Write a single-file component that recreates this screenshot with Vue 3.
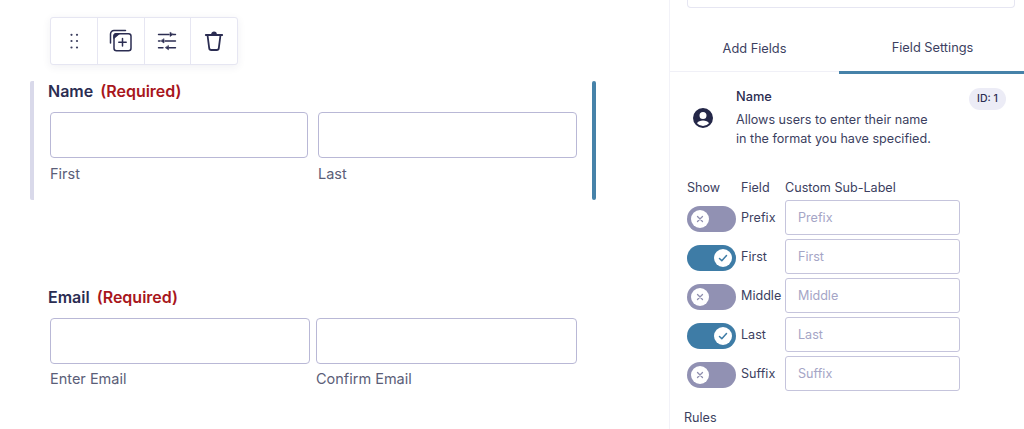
<script setup>
const rows = [
  { name: 'Prefix', on: false },
  { name: 'First', on: true },
  { name: 'Middle', on: false },
  { name: 'Last', on: true },
  { name: 'Suffix', on: false },
]
</script>

<template>
  <div class="page">
    <main class="canvas">
      <div class="toolbar">
        <button class="tool">
          <svg width="24" height="24" viewBox="0 0 24 24" fill="#3c3f5f"><circle cx="9.500" cy="5.800" r="1.100"/><circle cx="15" cy="5.800" r="1.100"/><circle cx="9.500" cy="12" r="1.100"/><circle cx="15" cy="12" r="1.100"/><circle cx="9.500" cy="18.500" r="1.100"/><circle cx="15" cy="18.500" r="1.100"/></svg>
        </button>
        <button class="tool">
          <svg width="24" height="24" viewBox="0 0 24 24" fill="none" stroke="#2b2d52" stroke-width="1.500" stroke-linecap="round" stroke-linejoin="round"><rect x="5" y="4.800" width="17" height="17" rx="2.500"/><path d="M13.500 9.500v7.500M9.800 13.200h7.400"/><path d="M1.500 14V5a3.500 3.500 0 0 1 3.500-3.500h11.500"/><path d="M5 9V7a2.200 2.200 0 0 1 2.200-2.200H10z" fill="#2b2d52"/></svg>
        </button>
        <button class="tool">
          <svg width="24" height="24" viewBox="0 0 24 24" fill="none" stroke="#2b2d52" stroke-width="1.400" stroke-linecap="round"><path d="M3.500 5.500h10.500M18 5.500h2.500M3.500 12h1.500M10 12h10.500M3.500 18.800h4.500M14 18.800h6.500"/><path d="M15 3.500v4l3 -2zM9 10v4l-3 -2zM13.500 16.800v4l-3 -2z" fill="#2b2d52" stroke-width="0.600"/></svg>
        </button>
        <button class="tool">
          <svg width="24" height="24" viewBox="0 0 24 24" fill="none" stroke="#2b2d52" stroke-width="1.800" stroke-linecap="round" stroke-linejoin="round"><path d="M3.800 6h16.400"/><path d="M5.500 6l1.700 13.200a2 2 0 0 0 2 1.800h5.600a2 2 0 0 0 2-1.800L18.500 6"/><path d="M10 5.500c0-2.700 4-2.700 4 0" fill="#2b2d52"/></svg>
        </button>
      </div>

      <section class="field selected">
        <h3 class="legend">Name <em>(Required)</em></h3>
        <div class="inputs name-inputs">
          <div class="cell"><div class="box"></div><span class="sub">First</span></div>
          <div class="cell"><div class="box"></div><span class="sub">Last</span></div>
        </div>
      </section>

      <section class="field email">
        <h3 class="legend">Email <em>(Required)</em></h3>
        <div class="inputs email-inputs">
          <div class="cell"><div class="box"></div><span class="sub">Enter Email</span></div>
          <div class="cell"><div class="box"></div><span class="sub">Confirm Email</span></div>
        </div>
      </section>
    </main>

    <aside class="panel">
      <div class="search"></div>
      <nav class="tabs">
        <div class="tab">Add Fields</div>
        <div class="tab active">Field Settings</div>
      </nav>
      <div class="info">
        <svg class="avatar" width="24" height="24" viewBox="0 0 24 24"><path fill="#242748" fill-rule="evenodd" d="M12 2a10 10 0 1 0 0 20 10 10 0 0 0 0-20zm0 4a3.500 3.500 0 1 1 0 7 3.500 3.500 0 0 1 0-7zm0 14a7.800 7.800 0 0 1-6-2.800c.9-1.700 3.400-2.700 6-2.700s5.100 1 6 2.700a7.800 7.800 0 0 1-6 2.800z"/></svg>
        <div class="info-text">
          <div class="info-name">Name</div>
          <p>Allows users to enter their name<br>in the format you have specified.</p>
        </div>
        <span class="badge">ID: 1</span>
      </div>

      <div class="grid-head">
        <span class="h-show">Show</span><span class="h-field">Field</span><span>Custom Sub-Label</span>
      </div>
      <div class="rows">
        <div v-for="r in rows" :key="r.name" class="row">
          <span class="toggle" :class="{ on: r.on }">
            <span class="knob">
              <svg v-if="r.on" width="12" height="12" viewBox="0 0 12 12" fill="none" stroke="#3e7ca6" stroke-width="1.500" stroke-linecap="round" stroke-linejoin="round"><path d="M2.500 6.500l2.300 2.200L9.500 3.500"/></svg>
              <svg v-else width="8" height="8" viewBox="0 0 8 8" fill="none" stroke="#8f8fae" stroke-width="1.300" stroke-linecap="round"><path d="M1.500 1.500l5 5M6.500 1.500l-5 5"/></svg>
            </span>
          </span>
          <span class="row-name">{{ r.name }}</span>
          <div class="row-input">{{ r.name }}</div>
        </div>
      </div>
      <div class="rules">Rules</div>
    </aside>
  </div>
</template>

<style>
html, body { margin: 0; background: #fff; overflow: hidden; }
</style>

<style scoped>
.page {
  display: flex;
  width: 1024px;
  height: 429px;
  overflow: hidden;
  font-family: Inter, "Liberation Sans", sans-serif;
  color: #3c3f5f;
  background: #fff;
}
.canvas {
  width: 669px;
  flex: none;
  padding: 17px 0 0 30px;
  box-sizing: border-box;
}
.toolbar {
  display: flex;
  width: 188px;
  height: 48px;
  margin-left: 20px;
  box-sizing: border-box;
  border: 1px solid #e6e6f2;
  border-radius: 3px;
  background: #fff;
  box-shadow: 0 2px 8px rgba(40, 40, 90, 0.07);
}
.tool {
  flex: 1;
  display: flex;
  align-items: center;
  justify-content: center;
  padding: 0;
  border: 0;
  border-right: 1px solid #e6e6f2;
  background: none;
}
.tool:last-child { border-right: 0; }
.field {
  box-sizing: border-box;
  width: 566px;
  height: 119px;
  margin-top: 16px;
  padding-left: 14px;
  border-left: 4px solid #d9d9ea;
  border-radius: 2px;
  position: relative;
}
.selected::after {
  content: "";
  position: absolute;
  right: 0;
  top: 0;
  bottom: 0;
  width: 4px;
  border-radius: 2px;
  background: #4682a9;
}
.legend {
  margin: 0;
  font-size: 16px;
  line-height: 20px;
  font-weight: 600;
  color: #2b2d52;
}
.legend em {
  font-style: normal;
  color: #a8161c;
  margin-left: 3px;
}
.inputs { display: flex; margin-top: 11px; margin-left: 2px; }
.name-inputs { gap: 10px; }
.name-inputs .cell:first-child { width: 258px; }
.name-inputs .cell:last-child { width: 259px; }
.email-inputs { gap: 6px; }
.email-inputs .cell:first-child { width: 260px; }
.email-inputs .cell:last-child { width: 261px; }
.box {
  height: 46px;
  box-sizing: border-box;
  border: 1px solid #b9b8d6;
  border-radius: 4px;
  background: #fff;
}
.sub {
  display: block;
  margin-top: 7px;
  font-size: 14.500px;
  line-height: 18px;
  color: #5b5e78;
}
.email {
  margin-top: 87px;
  border-left-color: transparent;
}
.email .sub { margin-top: 6px; }
.panel {
  width: 355px;
  flex: none;
  border-left: 1px solid #f2f2f8;
  box-sizing: border-box;
}
.search {
  box-sizing: border-box;
  width: 328px;
  height: 9px;
  margin-left: 17px;
  margin-top: -1px;
  border: 1px solid #e6e6f2;
  border-top: 0;
  border-radius: 0 0 4px 4px;
}
.tabs {
  display: flex;
  height: 63px;
  border-bottom: 1px solid #f0f0f7;
}
.tab {
  flex: 1;
  display: flex;
  align-items: center;
  justify-content: center;
  padding-top: 15px;
  box-sizing: border-box;
  height: 66px;
  font-size: 12.800px;
  color: #3c3f5f;
}
.tab:first-child { flex: none; width: 169px; }
.tab.active { border-bottom: 3px solid #4682a9; padding-left: 2px; }
.info {
  display: flex;
  position: relative;
  margin-top: 15px;
  padding-left: 21px;
  align-items: center;
}
.avatar { flex: none; margin-right: 21px; }
.info-text { padding-top: 1px; }
.info-name { font-size: 12.800px; line-height: 18px; font-weight: 500; color: #2b2d52; }
.info-text p {
  margin: 4px 0 0;
  font-size: 12.600px;
  line-height: 19px;
  color: #3c3f5f;
}
.badge {
  position: absolute;
  left: 299px;
  top: 1px;
  width: 37px;
  height: 22px;
  line-height: 22px;
  text-align: center;
  border-radius: 11px;
  background: #ececf6;
  font-size: 10.500px;
  font-weight: 500;
  color: #2b2d52;
}
.grid-head {
  display: flex;
  margin: 32px 0 0 17px;
  font-size: 12.600px;
  line-height: 16px;
  color: #3c3f5f;
}
.h-show { width: 54px; }
.h-field { width: 44px; }
.rows {
  display: flex;
  flex-direction: column;
  gap: 4px;
  margin: 4px 0 0 17px;
}
.row { display: flex; align-items: center; height: 35px; }
.toggle {
  width: 49px;
  height: 26px;
  margin-top: 3px;
  border-radius: 13px;
  background: #9191b3;
  display: flex;
  align-items: center;
  padding: 0 4px;
  box-sizing: border-box;
  flex: none;
}
.toggle.on { background: #3e7ca6; justify-content: flex-end; }
.knob {
  width: 18px;
  height: 18px;
  border-radius: 50%;
  background: #fff;
  display: flex;
  align-items: center;
  justify-content: center;
}
.row-name {
  width: 44px;
  margin-left: 5px;
  font-size: 12.600px;
  color: #3c3f5f;
  white-space: nowrap;
}
.row-input {
  width: 175px;
  height: 35px;
  box-sizing: border-box;
  border: 1px solid #c5c4dc;
  border-radius: 3px;
  padding-left: 12px;
  line-height: 33px;
  font-size: 12.600px;
  color: #a5a5c6;
}
.rules {
  margin: 19px 0 0 14px;
  font-size: 12.600px;
  line-height: 16px;
  color: #3c3f5f;
}
</style>
